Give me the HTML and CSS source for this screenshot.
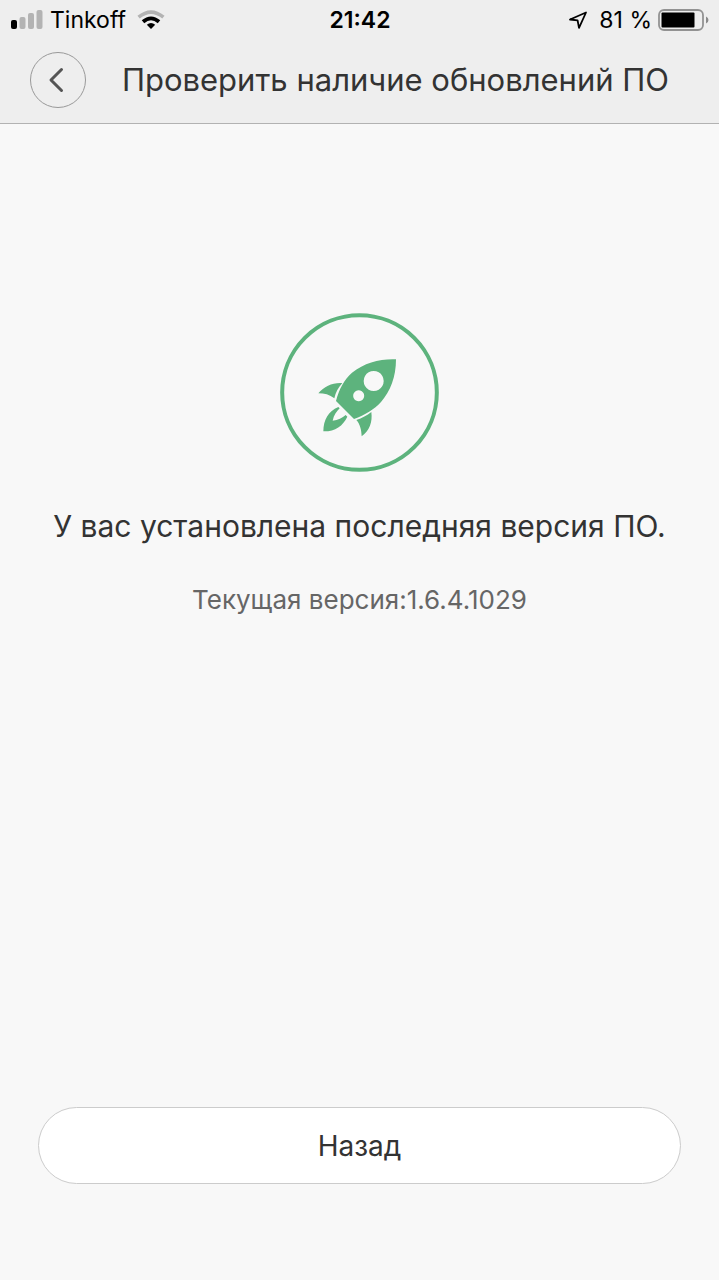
FILE: index.html
```html
<!DOCTYPE html>
<html lang="ru">
<head>
<meta charset="utf-8">
<meta name="viewport" content="width=device-width, initial-scale=1">
<title>Проверить наличие обновлений ПО</title>
<link rel="stylesheet" href="styles.css">
</head>
<body class="screen">
  <header class="header">
    <div class="status">
      <div class="status-side">
        <svg class="signal" viewBox="0 0 32 20" aria-hidden="true">
          <rect x="0" y="10" width="6" height="9" rx="2" fill="#000"/>
          <rect x="8.500" y="7" width="6" height="12" rx="2" fill="#b3b3b3"/>
          <rect x="17" y="3" width="6" height="16" rx="2" fill="#b3b3b3"/>
          <rect x="25.500" y="0" width="6" height="19" rx="2" fill="#b3b3b3"/>
        </svg>
        <span class="carrier">Tinkoff</span>
        <svg class="wifi" viewBox="0 0 28 20" aria-hidden="true">
          <path d="M1.600 7.200Q14 -3 26.400 7.200" fill="none" stroke="#b3b3b3" stroke-width="3.600"/>
          <path d="M6 11.800Q14 5 22 11.800" fill="none" stroke="#000" stroke-width="3.800"/>
          <path d="M9.800 14.800Q14 11.400 18.200 14.800L14 19Z" fill="#000"/>
        </svg>
      </div>
      <span class="clock">21:42</span>
      <div class="status-side status-right">
        <svg class="location" viewBox="0 0 20 20" aria-hidden="true">
          <path d="M2 9.500L18 2.500L11 17.800L9.600 10.400Z" fill="none" stroke="#000" stroke-width="1.800" stroke-linejoin="round"/>
        </svg>
        <span class="percent">81 %</span>
        <svg class="battery" viewBox="0 0 51 22" aria-hidden="true">
          <rect x="1" y="1" width="44" height="20" rx="5" fill="none" stroke="#929292" stroke-width="1.800"/>
          <rect x="3.500" y="3.500" width="33" height="15" rx="1" fill="#000"/>
          <path d="M48 7.500Q50.500 8.500 50.500 11T48 14.500Z" fill="#8a8a8a"/>
        </svg>
      </div>
    </div>
    <div class="nav">
      <button class="back" type="button" aria-label="Назад">
        <svg class="chevron" viewBox="0 0 16 26" aria-hidden="true">
          <path d="M13.500 2.500L3 13L13.500 23.500" fill="none" stroke="#555" stroke-width="3" stroke-linecap="round" stroke-linejoin="round"/>
        </svg>
      </button>
      <h1 class="title">Проверить наличие обновлений ПО</h1>
    </div>
  </header>
  <main class="content">
    <svg class="rocket" viewBox="30 23 477 477" aria-hidden="true">
      <circle cx="268.500" cy="261.500" r="232" fill="none" stroke="#5db37d" stroke-width="12"/>
      <g fill="#5db37d">
        <path fill-rule="evenodd" d="M378 162C378 216 361 258 333 290C313 312 285 329 252 341L198 287C207 252 222 223 246 202C284 172 331 160 378 162ZM311 197a30 30 0 1 0 .1 0ZM266 255a16.500 16.500 0 1 0 .1 0Z"/>
        <path d="M217 233C205 246 197 261 193 279C179 268 163 264 145 264C163 242 188 231 217 233Z"/>
        <path d="M259 344C276 338 291 331 304 320C308 350 299 375 275 393C274 373 270 356 259 344Z"/>
        <path d="M205 305L209 309C200 318 191 330 188 346C204 344 217 338 227 329L232 334C219 362 194 379 160 378C160 344 175 317 205 305Z"/>
      </g>
    </svg>
    <p class="message">У вас установлена последняя версия ПО.</p>
    <p class="version">Текущая версия:1.6.4.1029</p>
  </main>
  <footer class="footer">
    <button class="return" type="button">Назад</button>
  </footer>
</body>
</html>
```

FILE: styles.css
```css
* {
  box-sizing: border-box;
}

.screen {
  margin: 0;
  min-height: 100vh;
  display: flex;
  flex-direction: column;
  background: #f8f8f8;
  color: #333;
  font-family: Inter, "Liberation Sans", sans-serif;
}

.header {
  background: #eee;
  border-bottom: 1px solid #b2b2b2;
}

.status {
  display: grid;
  grid-template-columns: 1fr auto 1fr;
  align-items: center;
  height: 40px;
  padding: 0 10px 0 11px;
  color: #000;
  font-size: 23px;
  line-height: 28px;
}

.status-side {
  display: flex;
  align-items: center;
}

.status-right {
  justify-content: flex-end;
}

.signal {
  width: 32px;
  height: 20px;
}

.carrier {
  margin: 0 11px 0 7px;
}

.wifi {
  width: 28px;
  height: 20px;
}

.clock {
  font-weight: 600;
}

.location {
  width: 20px;
  height: 20px;
}

.percent {
  margin: 0 6px 0 11px;
}

.battery {
  width: 51px;
  height: 22px;
}

.nav {
  display: flex;
  align-items: center;
  padding: 12px 30px 15px;
}

.back {
  display: flex;
  align-items: center;
  justify-content: center;
  flex: none;
  width: 56px;
  height: 56px;
  padding: 0 4px 0 0;
  border: 1px solid #999;
  border-radius: 50%;
  background: transparent;
}

.chevron {
  width: 16px;
  height: 26px;
}

.title {
  flex: 1;
  margin: 0;
  padding-left: 16px;
  font-size: 31px;
  font-weight: 400;
  line-height: 40px;
  text-align: center;
}

.content {
  flex: 1;
  display: flex;
  flex-direction: column;
  align-items: center;
  padding: 189px 24px 0;
  text-align: center;
}

.rocket {
  width: 159px;
  height: 159px;
}

.message {
  margin: 34px 0 0;
  font-size: 30px;
  line-height: 40px;
}

.version {
  margin: 36px 0 0;
  color: #666;
  font-size: 26px;
  line-height: 36px;
}

.footer {
  padding: 0 38px 96px;
}

.return {
  width: 100%;
  height: 77px;
  border: 1px solid #ccc;
  border-radius: 39px;
  background: #fff;
  color: #333;
  font: inherit;
  font-size: 28px;
}
```
